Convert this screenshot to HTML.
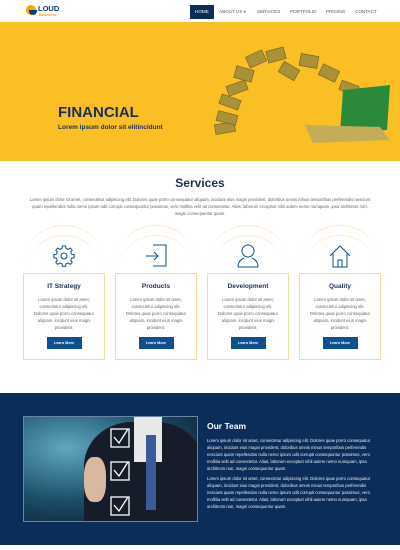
<!DOCTYPE html>
<html><head><style>
*{margin:0;padding:0;box-sizing:border-box}
body{width:400px;height:550px;overflow:hidden;background:#fff;font-family:"Liberation Sans",sans-serif;position:relative}
.a{position:absolute}
.nav a{position:absolute;top:9px;font-size:4.6px;color:#555;}
.card{position:absolute;top:273px;width:82px;height:87px;border:1px solid #f6dc9a;text-align:center}
.card h3{font-size:6.5px;color:#1b2f55;margin-top:9px}
.card p{font-size:4.2px;color:#666;line-height:7px;margin:6px 8px 0}
.card b{display:block;margin:6px auto 0;width:35px;height:12px;background:#0d4f8f;color:#fff;font-size:3.8px;line-height:12px}
.arc{position:absolute;top:225px;width:82px;height:40px;border-top:1px solid #fbeccc;border-radius:50%/100% 100% 0 0}
.lt{font-size:4.2px;color:#e6ecf5;line-height:7px}
</style></head><body>
<div class="a" style="left:26px;top:5px;width:10px;height:10px;border-radius:50%;background:#f2a900"></div>
<div class="a" style="left:29px;top:10px;width:8px;height:5px;background:#0d3a6e;border-radius:0 0 5px 5px"></div>
<div class="a" style="left:38px;top:4px;font-size:7.5px;font-weight:bold;color:#0d3a6e">LOUD</div>
<div class="a" style="left:39px;top:12px;font-size:4px;color:#f2a900;font-weight:bold">Business</div>
<div class="a" style="left:190px;top:5px;width:24px;height:14px;background:#0b2d5a"></div>
<div class="nav">
<a style="left:195px;color:#fff">HOME</a><a style="left:219px">ABOUT US ▾</a><a style="left:257px">SERVICES</a><a style="left:290px">PORTFOLIO</a><a style="left:326px">PRICING</a><a style="left:355px">CONTACT</a></div>
<div class="a" style="left:0;top:22px;width:400px;height:139px;background:#fbbf26"></div>
<svg class="a" style="left:205px;top:35px" width="195" height="115">
<g fill="#a99138" stroke="#6e5e22" stroke-width=".6">
<rect x="10" y="88" width="20" height="10" transform="rotate(-10 20 93)"/><rect x="12" y="78" width="20" height="10" transform="rotate(15 22 83)"/><rect x="15" y="62" width="20" height="10" transform="rotate(20 25 67)"/><rect x="22" y="48" width="20" height="10" transform="rotate(-20 32 53)"/><rect x="30" y="33" width="18" height="12" transform="rotate(15 39 39)"/><rect x="42" y="18" width="18" height="12" transform="rotate(-25 51 24)"/><rect x="62" y="14" width="18" height="12" transform="rotate(-15 71 20)"/><rect x="75" y="30" width="18" height="12" transform="rotate(30 84 36)"/><rect x="95" y="20" width="18" height="12" transform="rotate(10 104 26)"/><rect x="115" y="32" width="18" height="12" transform="rotate(25 124 38)"/><rect x="135" y="48" width="18" height="10" transform="rotate(20 144 53)"/><rect x="150" y="62" width="16" height="10"/></g>
<polygon points="138,55 185,50 182,95 135,98" fill="#2a8a3a"/>
<polygon points="100,90 175,92 185,105 108,108" fill="#c5ac58"/></svg>
<div class="a" style="left:58px;top:104px;font-size:15px;font-weight:bold;color:#1b2f55">FINANCIAL</div>
<div class="a" style="left:58px;top:124px;font-size:6.5px;font-weight:bold;color:#1b2f55">Lorem ipsum dolor sit elitincidunt</div>
<div class="a" style="left:0;top:176px;width:400px;text-align:center;font-size:12px;font-weight:bold;color:#1b2f55">Services</div>
<div class="a" style="left:28px;top:196px;width:344px;text-align:center;font-size:4.2px;color:#666;line-height:7px">Lorem ipsum dolor sit amet, consectetur adipiscing elit. Dolores quae porro consequatur aliquam, incidunt eius magni provident, doloribus omnis minus temporibus perferendis nesciunt quam repellendus nulla nemo ipsum odit corrupti consequuntur possimus, vero mollitia velit ad consectetur. Alias, laborum excepturi nihil autem nemo numquam, ipsa architecto non, magni consequuntur quam.</div>
<div class="arc" style="left:23px"></div><div class="arc" style="left:115px"></div><div class="arc" style="left:207px"></div><div class="arc" style="left:299px"></div>
<div class="arc" style="left:25px;top:235px;width:78px"></div><div class="arc" style="left:117px;top:235px;width:78px"></div><div class="arc" style="left:209px;top:235px;width:78px"></div><div class="arc" style="left:301px;top:235px;width:78px"></div>
<svg class="a" style="left:0;top:240px" width="400" height="30" fill="none" stroke="#0d4f8f" stroke-width="1">
<circle cx="64" cy="16" r="3"/><path d="M62.5 6h3l.5 2.5 2 1 2.2-1.5 2 2-1.5 2.2 1 2 2.5.5v3l-2.5.5-1 2 1.5 2.2-2 2-2.2-1.5-2 1-.5 2.5h-3l-.5-2.5-2-1-2.2 1.5-2-2 1.5-2.2-1-2-2.5-.5v-3l2.5-.5 1-2-1.5-2.2 2-2 2.2 1.5 2-1z"/>
<path d="M153 5h13v21h-13M146 16h11M154 12l4 4-4 4"/>
<circle cx="248" cy="11" r="6"/><path d="M238 27c0-6 4-8 6-9M258 27c0-6-4-8-6-9M238 27h20"/>
<path d="M330 16l10-10 10 10M333 13v14h14v-14M338 27v-7h4v7"/></svg>
<div class="card" style="left:23px"><h3>IT Strategy</h3><p>Lorem ipsum dolor sit amet, consectetur adipiscing elit. Dolores quae porro consequatur aliquam, incidunt eius magni provident.</p><b>Learn More</b></div>
<div class="card" style="left:115px"><h3>Products</h3><p>Lorem ipsum dolor sit amet, consectetur adipiscing elit. Dolores quae porro consequatur aliquam, incidunt eius magni provident.</p><b>Learn More</b></div>
<div class="card" style="left:207px"><h3>Development</h3><p>Lorem ipsum dolor sit amet, consectetur adipiscing elit. Dolores quae porro consequatur aliquam, incidunt eius magni provident.</p><b>Learn More</b></div>
<div class="card" style="left:299px"><h3>Quality</h3><p>Lorem ipsum dolor sit amet, consectetur adipiscing elit. Dolores quae porro consequatur aliquam, incidunt eius magni provident.</p><b>Learn More</b></div>
<div class="a" style="left:0;top:393px;width:400px;height:152px;background:#0b2d5a"></div>
<div class="a" style="left:23px;top:416px;width:175px;height:106px;border:1px solid #6a84a8;background:radial-gradient(ellipse at 25% 30%,#5fa8c0,#1d4f6a 50%,#0c1d30 90%);overflow:hidden">
<div class="a" style="left:60px;top:5px;width:120px;height:110px;background:#161c2a;border-radius:40% 40% 0 0"></div>
<div class="a" style="left:110px;top:0;width:28px;height:45px;background:#e8e8e8"></div>
<div class="a" style="left:122px;top:18px;width:10px;height:75px;background:#3a5a9a"></div>
<div class="a" style="left:60px;top:40px;width:22px;height:45px;background:#d8b8a0;border-radius:40%"></div>
<svg class="a" style="left:0;top:0" width="175" height="106" fill="none" stroke="#fff" stroke-width="1.3"><rect x="87" y="12" width="18" height="18"/><rect x="87" y="45" width="18" height="18"/><rect x="87" y="80" width="18" height="18"/><path d="M90 20l5 6 9-14M90 53l5 6 9-14M90 88l5 6 9-14"/></svg></div>
<div class="a" style="left:207px;top:421px;font-size:8.5px;font-weight:bold;color:#fff">Our Team</div>
<div class="a lt" style="left:207px;top:437px;width:175px">Lorem ipsum dolor sit amet, consectetur adipiscing elit. Dolores quae porro consequatur aliquam, incidunt eius magni provident, doloribus omnis minus temporibus perferendis nesciunt quam repellendus nulla nemo ipsum odit corrupti consequuntur possimus, vero mollitia velit ad consectetur. Alias, laborum excepturi nihil autem nemo numquam, ipsa architecto non, magni consequuntur quam.</div>
<div class="a lt" style="left:207px;top:475px;width:175px">Lorem ipsum dolor sit amet, consectetur adipiscing elit. Dolores quae porro consequatur aliquam, incidunt eius magni provident, doloribus omnis minus temporibus perferendis nesciunt quam repellendus nulla nemo ipsum odit corrupti consequuntur possimus, vero mollitia velit ad consectetur. Alias, laborum excepturi nihil autem nemo numquam, ipsa architecto non, magni consequuntur quam.</div>
</body></html>
